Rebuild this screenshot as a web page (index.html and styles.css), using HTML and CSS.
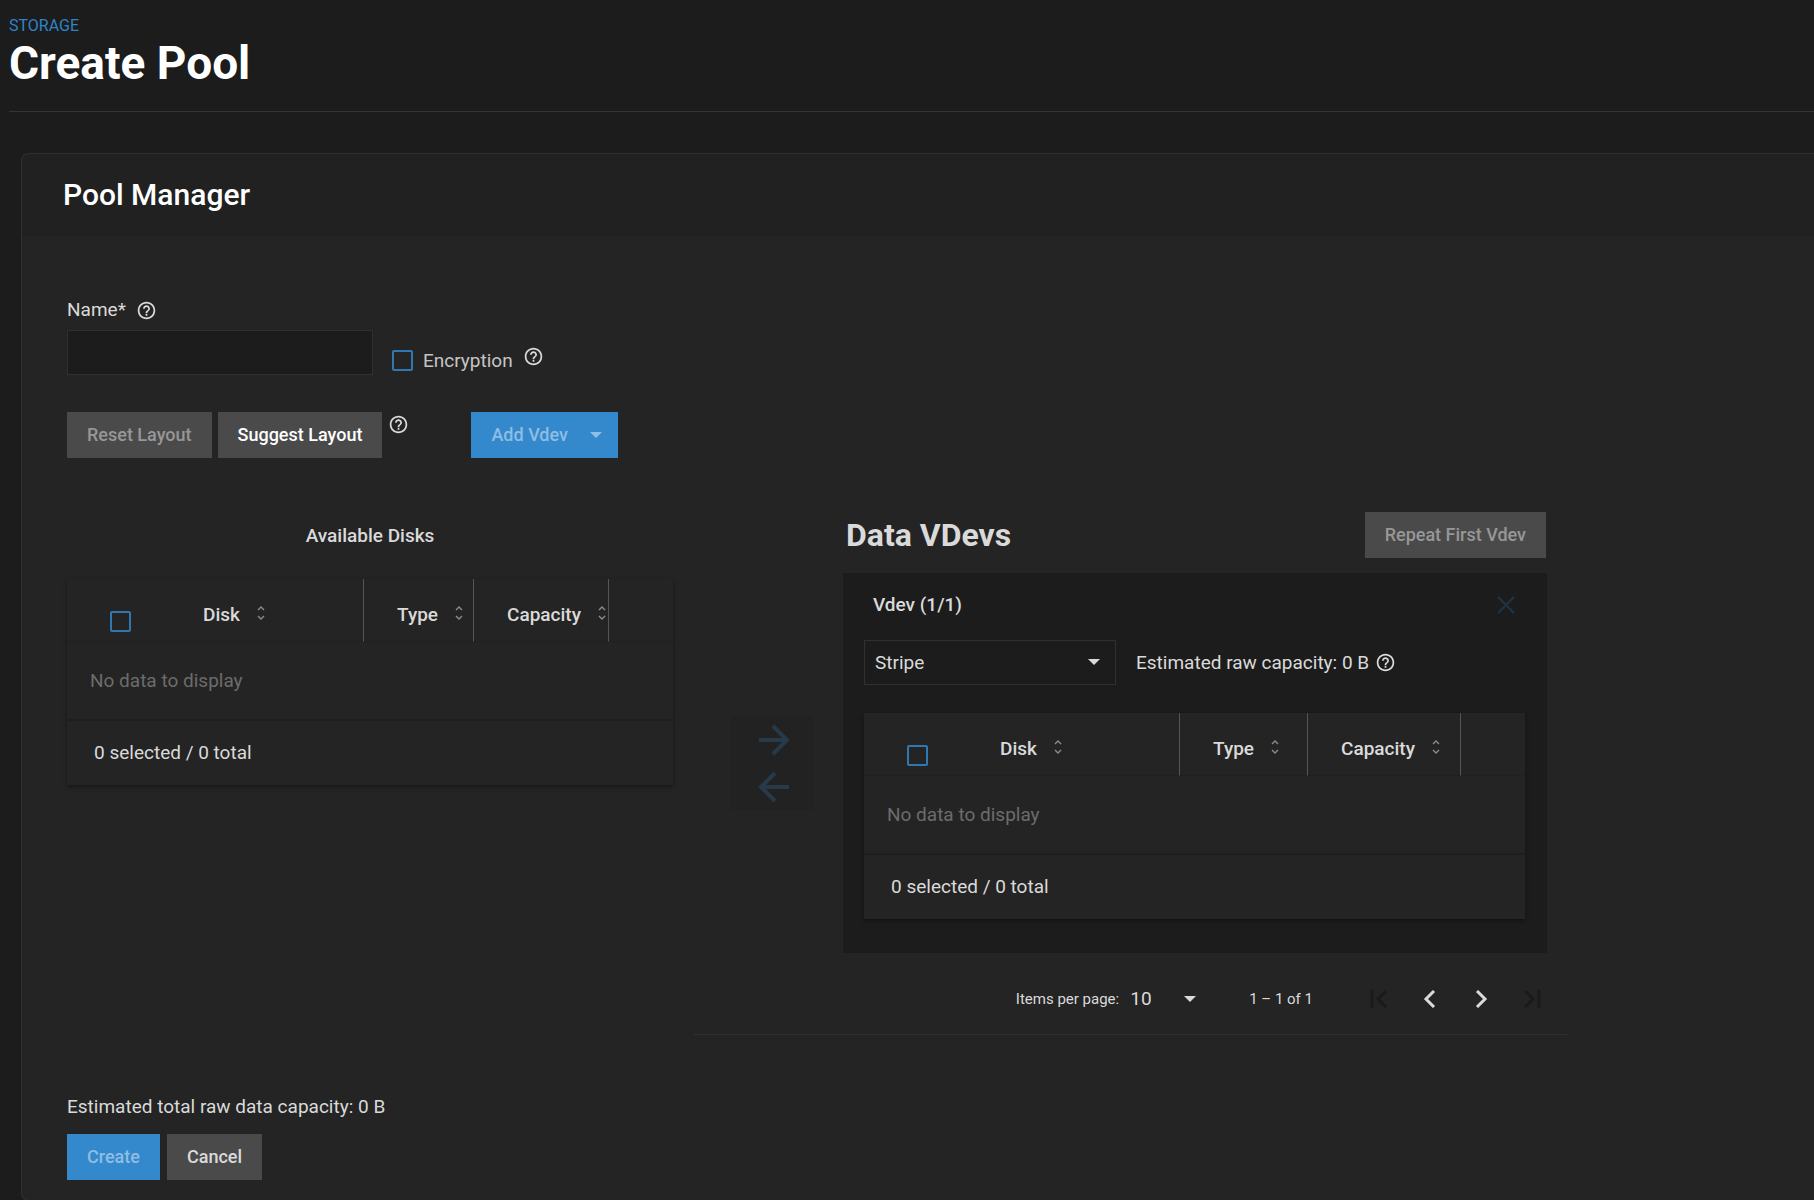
FILE: index.html
```html
<!DOCTYPE html>
<html lang="en">
<head>
    <meta charset="UTF-8">
    <meta name="viewport" content="width=device-width, initial-scale=1">
    <title>Create Pool</title>
    <link rel="stylesheet" href="styles.css">
</head>
<body>
<svg class="sprite" aria-hidden="true">
    <symbol id="help" viewBox="0 0 24 24">
        <path d="M11 18h2v-2h-2v2zm1-16C6.48 2 2 6.48 2 12s4.48 10 10 10 10-4.48 10-10S17.52 2 12 2zm0 18c-4.41 0-8-3.59-8-8s3.59-8 8-8 8 3.59 8 8-3.59 8-8 8zm0-14c-2.21 0-4 1.79-4 4h2c0-1.1.9-2 2-2s2 .9 2 2c0 2-3 1.75-3 5h2c0-2.25 3-2.5 3-5 0-2.21-1.79-4-4-4z"/>
    </symbol>
    <symbol id="sort" viewBox="0 0 8 16">
        <path d="M1 5l3-3 3 3M1 11l3 3 3-3" fill="none" stroke="currentColor" stroke-width="1.4"/>
    </symbol>
</svg>

<header class="page-header">
    <a class="breadcrumb" href="#">STORAGE</a>
    <h1>Create Pool</h1>
</header>

<main class="card">
    <div class="card-header">
        <h2>Pool Manager</h2>
    </div>
    <form class="card-content">
        <div class="name-row">
            <div class="field">
                <div class="field-label">
                    <label for="pool-name">Name*</label>
                    <svg class="help"><use href="#help"/></svg>
                </div>
                <input type="text" id="pool-name" class="text-input">
            </div>
            <div class="encryption">
                <input type="checkbox" id="encryption" class="checkbox">
                <label for="encryption">Encryption</label>
                <svg class="help raised"><use href="#help"/></svg>
            </div>
        </div>

        <div class="layout-row">
            <button type="button" class="btn" disabled>Reset Layout</button>
            <button type="button" class="btn">Suggest Layout</button>
            <svg class="help"><use href="#help"/></svg>
            <button type="button" class="btn primary add-vdev" disabled>Add Vdev <span class="caret"></span></button>
        </div>

        <div class="layout">
            <section class="available">
                <h3>Available Disks</h3>
                <table class="disks">
                    <colgroup>
                        <col class="col-check"><col><col class="col-type"><col class="col-capacity"><col class="col-end">
                    </colgroup>
                    <thead>
                    <tr>
                        <th class="check"><input type="checkbox" class="checkbox" aria-label="Select all disks"></th>
                        <th class="ruled">Disk<svg class="sort"><use href="#sort"/></svg></th>
                        <th class="ruled">Type<svg class="sort"><use href="#sort"/></svg></th>
                        <th class="ruled">Capacity<svg class="sort"><use href="#sort"/></svg></th>
                        <th></th>
                    </tr>
                    </thead>
                    <tbody>
                    <tr><td class="empty" colspan="5">No data to display</td></tr>
                    </tbody>
                    <tfoot>
                    <tr><td colspan="5">0 selected / 0 total</td></tr>
                    </tfoot>
                </table>
            </section>

            <section class="data">
                <div class="data-body">
                    <div class="transfer">
                        <button type="button" class="icon-btn" aria-label="Add to vdev" disabled>
                            <svg viewBox="0 0 32 32"><path d="M1 16h28M15 2l14 14-14 14"/></svg>
                        </button>
                        <button type="button" class="icon-btn" aria-label="Remove from vdev" disabled>
                            <svg viewBox="0 0 32 32"><path d="M31 16H3M17 2L3 16l14 14"/></svg>
                        </button>
                    </div>
                    <div class="vdevs">
                        <div class="vdevs-header">
                            <h2>Data VDevs</h2>
                            <button type="button" class="btn" disabled>Repeat First Vdev</button>
                        </div>
                        <div class="vdev">
                            <div class="vdev-title">
                                <h4>Vdev (1/1)</h4>
                                <button type="button" class="close" aria-label="Remove vdev" disabled>
                                    <svg viewBox="0 0 18 18"><path d="M1 1l16 16M17 1L1 17"/></svg>
                                </button>
                            </div>
                            <div class="vdev-type">
                                <div class="select">
                                    <select aria-label="Vdev type">
                                        <option>Stripe</option>
                                    </select>
                                </div>
                                <span>Estimated raw capacity: 0 B</span>
                                <svg class="help"><use href="#help"/></svg>
                            </div>
                            <table class="disks">
                                <colgroup>
                                    <col class="col-check"><col><col class="col-type"><col class="col-capacity"><col class="col-end">
                                </colgroup>
                                <thead>
                                <tr>
                                    <th class="check"><input type="checkbox" class="checkbox" aria-label="Select all vdev disks"></th>
                                    <th class="ruled">Disk<svg class="sort"><use href="#sort"/></svg></th>
                                    <th class="ruled">Type<svg class="sort"><use href="#sort"/></svg></th>
                                    <th class="ruled">Capacity<svg class="sort"><use href="#sort"/></svg></th>
                                    <th></th>
                                </tr>
                                </thead>
                                <tbody>
                                <tr><td class="empty" colspan="5">No data to display</td></tr>
                                </tbody>
                                <tfoot>
                                <tr><td colspan="5">0 selected / 0 total</td></tr>
                                </tfoot>
                            </table>
                        </div>
                    </div>
                </div>

                <div class="paginator">
                    <label for="page-size">Items per page:</label>
                    <div class="select page-size">
                        <select id="page-size">
                            <option>10</option>
                        </select>
                    </div>
                    <span class="range">1 – 1 of 1</span>
                    <button type="button" class="page-btn" aria-label="First page" disabled>
                        <svg viewBox="0 0 18 18"><path d="M2 0v18M16 1L8 9l8 8"/></svg>
                    </button>
                    <button type="button" class="page-btn" aria-label="Previous page">
                        <svg viewBox="0 0 18 18"><path d="M13 1L5 9l8 8"/></svg>
                    </button>
                    <button type="button" class="page-btn" aria-label="Next page">
                        <svg viewBox="0 0 18 18"><path d="M5 1l8 8-8 8"/></svg>
                    </button>
                    <button type="button" class="page-btn" aria-label="Last page" disabled>
                        <svg viewBox="0 0 18 18"><path d="M16 0v18M2 1l8 8-8 8"/></svg>
                    </button>
                </div>
            </section>
        </div>

        <p class="total">Estimated total raw data capacity: 0 B</p>
        <div class="actions">
            <button type="submit" class="btn primary" disabled>Create</button>
            <button type="button" class="btn cancel">Cancel</button>
        </div>
    </form>
</main>
</body>
</html>
```
FILE: styles.css
```css
* {
    margin: 0;
    padding: 0;
    box-sizing: border-box;
}

body {
    background-color: #1c1c1c;
    color: #dadada;
    font-family: Roboto, "Liberation Sans", sans-serif;
    font-size: 19px;
    line-height: 24px;
}

svg {
    display: block;
    flex: none;
}

button,
input,
select {
    font: inherit;
    color: inherit;
}

button {
    border: none;
}

.sprite {
    display: none;
}

/* page header */

.page-header {
    margin-left: 9px;
    padding: 15px 0 21px;
    border-bottom: 1px solid #343434;
}

.breadcrumb {
    display: block;
    color: #2f84c7;
    font-size: 16px;
    line-height: 22px;
    text-decoration: none;
}

h1 {
    color: #ffffff;
    font-size: 46px;
    line-height: 53px;
}

/* card */

.card {
    margin: 41px 0 0 21px;
    border: 1px solid #303030;
    border-right: none;
    border-radius: 8px 0 0 8px;
    background-color: #242424;
}

.card-header {
    padding: 24px 41px;
    border-radius: 8px 0 0 0;
    background-color: #212121;
}

.card-header h2 {
    color: #ffffff;
    font-size: 30px;
    font-weight: 500;
    line-height: 34px;
}

.card-content {
    padding: 62px 0 20px 45px;
}

.help {
    width: 21px;
    height: 21px;
    fill: #dadada;
}

/* name and encryption */

.name-row {
    display: flex;
    align-items: flex-end;
    gap: 19px;
}

.field {
    width: 306px;
}

.field-label {
    display: flex;
    align-items: center;
    gap: 10px;
    margin-bottom: 8px;
}

.text-input {
    display: block;
    width: 100%;
    height: 45px;
    padding: 0 10px;
    border: 1px solid #303030;
    background-color: #1c1c1c;
    outline: none;
}

.encryption {
    display: flex;
    align-items: center;
    gap: 10px;
    color: #c4c4c4;
}

.raised {
    margin-bottom: 8px;
}

.checkbox {
    display: block;
    flex: none;
    appearance: none;
    width: 21px;
    height: 21px;
    border: 2px solid #2f78b2;
    border-radius: 2px;
}

/* buttons */

.btn {
    height: 46px;
    padding: 0 20px;
    background-color: #4a4a4a;
    color: #ffffff;
    font-size: 18px;
    font-weight: 500;
    white-space: nowrap;
}

.btn:disabled {
    color: #979797;
}

.btn.cancel {
    color: #dadada;
}

.btn.primary {
    background-color: #3489cc;
    color: #8fbde3;
}

.caret {
    border: 6px solid transparent;
    border-top-color: currentColor;
    border-bottom: none;
}

.layout-row {
    display: flex;
    gap: 6px;
    margin-top: 37px;
}

.layout-row .help {
    margin-top: 2px;
}

.add-vdev {
    display: flex;
    align-items: center;
    gap: 22px;
    margin-left: 56px;
    padding-right: 16px;
}

/* disks and vdevs */

.layout {
    display: grid;
    grid-template-columns: 606fr 873fr 226fr;
    gap: 21px;
    margin-top: 54px;
}

.available h3 {
    margin: 12px 0 31px;
    font-size: 19px;
    font-weight: 500;
    text-align: center;
}

.disks {
    width: 100%;
    table-layout: fixed;
    border-spacing: 0;
    background-color: #242424;
    box-shadow: 0 2px 4px rgba(0, 0, 0, 0.35);
    text-align: left;
}

.disks th {
    height: 63px;
    padding: 10px 0 0 33px;
    border-bottom: 1px solid #202020;
    font-weight: 500;
    white-space: nowrap;
}

.disks .check {
    padding: 22px 0 0 43px;
}

.disks .ruled {
    border-right: 1px solid #565656;
}

.disks td {
    height: 64px;
    padding: 0 27px;
}

.disks .empty {
    height: 79px;
    padding: 0 23px;
    border-bottom: 2px solid #1e1e1e;
    color: #6c6c6c;
}

.sort {
    display: inline-block;
    width: 8px;
    height: 16px;
    margin-left: 17px;
    color: #8c8c8c;
}

.col-check {
    width: 103px;
}

.col-type {
    width: 110px;
}

.col-capacity {
    width: 135px;
}

.col-end {
    width: 64px;
}

.vdev .col-type {
    width: 128px;
}

.vdev .col-capacity {
    width: 153px;
}

.data {
    border-bottom: 1px solid #303030;
}

.data-body {
    display: flex;
    gap: 30px;
    padding: 0 20px 0 37px;
}

.transfer {
    display: flex;
    flex: none;
    flex-direction: column;
    align-self: flex-start;
    width: 82px;
    margin-top: 204px;
    background-color: #222222;
}

.icon-btn {
    display: flex;
    align-items: center;
    justify-content: center;
    height: 47px;
    padding-left: 4px;
    background: none;
}

.icon-btn svg {
    width: 32px;
    height: 32px;
    fill: none;
    stroke: #263a4a;
    stroke-width: 4;
}

.vdevs {
    flex: 1;
}

.vdevs-header {
    display: flex;
    align-items: center;
    justify-content: space-between;
    margin-bottom: 15px;
    padding: 0 1px 0 3px;
}

.vdevs-header h2 {
    font-size: 32px;
    line-height: 40px;
}

.vdev {
    padding: 8px 22px 34px 21px;
    background-color: #1c1c1c;
}

.vdev-title {
    display: flex;
    align-items: center;
    justify-content: space-between;
    padding-left: 9px;
}

.vdev-title h4 {
    font-size: 19px;
    font-weight: 500;
}

.close {
    padding: 15px 10px;
    background: none;
}

.close svg {
    width: 18px;
    height: 18px;
    fill: none;
    stroke: #1f3547;
    stroke-width: 2;
}

.vdev-type {
    display: flex;
    align-items: center;
    gap: 6px;
    margin: 11px 0 28px;
}

.select {
    position: relative;
    width: 252px;
    margin-right: 14px;
}

.select select {
    display: block;
    appearance: none;
    width: 100%;
    height: 45px;
    padding: 0 10px;
    border: 1px solid #303030;
    background: none;
    outline: none;
}

.select::after {
    content: "";
    position: absolute;
    top: 19px;
    right: 16px;
    border: 6px solid transparent;
    border-top-color: #dadada;
    border-bottom: none;
    pointer-events: none;
}

/* paginator */

.paginator {
    display: flex;
    align-items: center;
    justify-content: flex-end;
    padding: 22px 9px 11px 0;
    font-size: 15px;
}

.page-size {
    width: 72px;
    margin: 0 47px 0 11px;
}

.page-size select {
    padding: 0;
    border: none;
    font-size: 19px;
}

.page-size::after {
    right: 6px;
}

.range {
    margin-right: 41px;
}

.page-btn {
    width: 51px;
    height: 48px;
    padding: 0 16px;
    background: none;
}

.page-btn svg {
    width: 18px;
    height: 18px;
    fill: none;
    stroke: #dadada;
    stroke-width: 3;
}

.page-btn:disabled svg {
    stroke: #1a1a1a;
}

/* footer */

.total {
    margin-top: 60px;
}

.actions {
    display: flex;
    gap: 7px;
    margin-top: 15px;
}
```
